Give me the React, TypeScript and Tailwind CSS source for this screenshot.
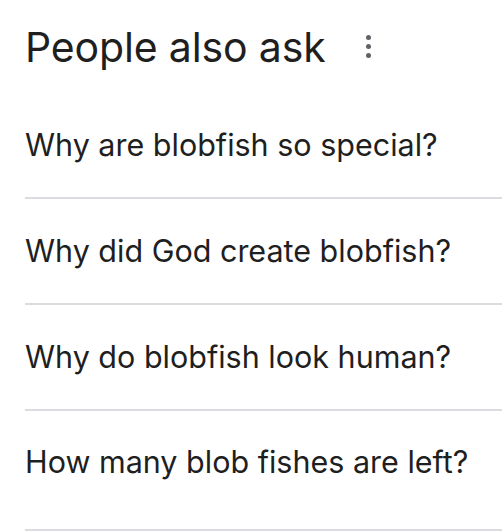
import React from "react";

const questions = [
  "Why are blobfish so special?",
  "Why did God create blobfish?",
  "Why do blobfish look human?",
  "How many blob fishes are left?",
];

export default function App() {
  return (
    <div
      className="w-[502px] h-[532px] bg-white pl-[25px] overflow-hidden text-[#1f1f1f]"
      style={{ fontFamily: "Inter, Roboto, sans-serif" }}
    >
      <div className="h-[93px] flex items-center">
        <h2 className="text-[41px] leading-[52px] font-normal tracking-[-0.15px]">People also ask</h2>
        <div className="ml-[40px] flex flex-col items-center gap-[4px]">
          <span className="block w-[5px] h-[5px] rounded-full bg-[#5f6368]" />
          <span className="block w-[5px] h-[5px] rounded-full bg-[#5f6368]" />
          <span className="block w-[5px] h-[5px] rounded-full bg-[#5f6368]" />
        </div>
      </div>
      <div className="flex flex-col">
        {questions.map((q, i) => (
          <div
            key={q}
            className={
              i === questions.length - 1
                ? "h-[120px] pb-[16px] flex items-center border-b-2 border-[#dadce0]"
                : "h-[106px] flex items-center border-b-2 border-[#dadce0]"
            }
          >
            <span className="text-[30.5px] leading-[40px]">{q}</span>
          </div>
        ))}
      </div>
    </div>
  );
}
